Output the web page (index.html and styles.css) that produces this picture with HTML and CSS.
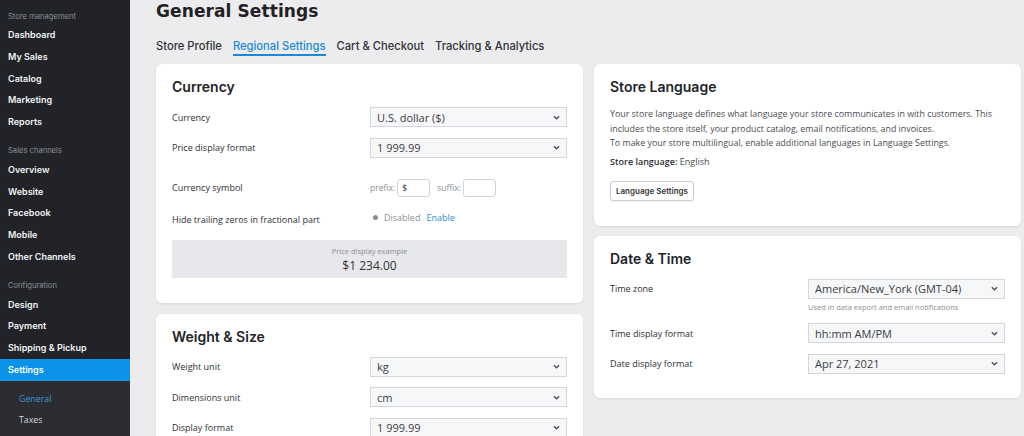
FILE: index.html
```html
<!DOCTYPE html>
<html lang="en">
<head>
<meta charset="utf-8">
<title>General Settings</title>
<link rel="stylesheet" href="styles.css">
</head>
<body>
<div class="app">
  <aside class="sidebar">
    <div class="nav-section">
      <div class="nav-heading">Store management</div>
      <a class="nav-item">Dashboard</a>
      <a class="nav-item">My Sales</a>
      <a class="nav-item">Catalog</a>
      <a class="nav-item">Marketing</a>
      <a class="nav-item">Reports</a>
    </div>
    <div class="nav-section">
      <div class="nav-heading">Sales channels</div>
      <a class="nav-item">Overview</a>
      <a class="nav-item">Website</a>
      <a class="nav-item">Facebook</a>
      <a class="nav-item">Mobile</a>
      <a class="nav-item">Other Channels</a>
    </div>
    <div class="nav-section">
      <div class="nav-heading">Configuration</div>
      <a class="nav-item">Design</a>
      <a class="nav-item">Payment</a>
      <a class="nav-item">Shipping &amp; Pickup</a>
      <a class="nav-item active">Settings</a>
    </div>
    <div class="subnav">
      <a class="sub-item active">General</a>
      <a class="sub-item">Taxes</a>
    </div>
  </aside>

  <main class="main">
    <h1 class="page-title">General Settings</h1>
    <nav class="tabs">
      <a class="tab">Store Profile</a>
      <a class="tab active">Regional Settings</a>
      <a class="tab">Cart &amp; Checkout</a>
      <a class="tab">Tracking &amp; Analytics</a>
    </nav>

    <div class="columns">
      <div class="column">
        <section class="card card-currency">
          <h2 class="card-title">Currency</h2>
          <div class="row">
            <span class="label">Currency</span>
            <div class="select"><span>U.S. dollar ($)</span><svg class="chev" viewBox="0 0 8 5"><path d="M1 1l3 3 3-3" /></svg></div>
          </div>
          <div class="row">
            <span class="label">Price display format</span>
            <div class="select"><span>1 999.99</span><svg class="chev" viewBox="0 0 8 5"><path d="M1 1l3 3 3-3" /></svg></div>
          </div>
          <div class="row row-symbol">
            <span class="label">Currency symbol</span>
            <div class="symbol-fields">
              <span class="hint">prefix:</span><span class="small-input">$</span>
              <span class="hint">suffix:</span><span class="small-input"></span>
            </div>
          </div>
          <div class="row row-zeros">
            <span class="label label-zeros">Hide trailing zeros in fractional part</span>
            <div class="status"><span class="dot"></span><span class="status-text">Disabled</span><a class="link">Enable</a></div>
          </div>
          <div class="example">
            <div class="example-caption">Price display example</div>
            <div class="example-value">$1 234.00</div>
          </div>
        </section>

        <section class="card">
          <h2 class="card-title">Weight &amp; Size</h2>
          <div class="row">
            <span class="label">Weight unit</span>
            <div class="select"><span>kg</span><svg class="chev" viewBox="0 0 8 5"><path d="M1 1l3 3 3-3" /></svg></div>
          </div>
          <div class="row">
            <span class="label">Dimensions unit</span>
            <div class="select"><span>cm</span><svg class="chev" viewBox="0 0 8 5"><path d="M1 1l3 3 3-3" /></svg></div>
          </div>
          <div class="row">
            <span class="label">Display format</span>
            <div class="select"><span>1 999.99</span><svg class="chev" viewBox="0 0 8 5"><path d="M1 1l3 3 3-3" /></svg></div>
          </div>
        </section>
      </div>

      <div class="column">
        <section class="card card-lang">
          <h2 class="card-title">Store Language</h2>
          <p class="desc">Your store language defines what language your store communicates in with customers. This includes the store itself, your product catalog, email notifications, and invoices.<br>To make your store multilingual, enable additional languages in Language Settings.</p>
          <p class="lang-line"><b>Store language:</b> English</p>
          <button class="btn">Language Settings</button>
        </section>

        <section class="card">
          <h2 class="card-title">Date &amp; Time</h2>
          <div class="row row-top">
            <span class="label">Time zone</span>
            <div class="field">
              <div class="select"><span>America/New_York (GMT-04)</span><svg class="chev" viewBox="0 0 8 5"><path d="M1 1l3 3 3-3" /></svg></div>
              <div class="helper">Used in data export and email notifications</div>
            </div>
          </div>
          <div class="row">
            <span class="label">Time display format</span>
            <div class="select"><span>hh:mm AM/PM</span><svg class="chev" viewBox="0 0 8 5"><path d="M1 1l3 3 3-3" /></svg></div>
          </div>
          <div class="row">
            <span class="label">Date display format</span>
            <div class="select"><span>Apr 27, 2021</span><svg class="chev" viewBox="0 0 8 5"><path d="M1 1l3 3 3-3" /></svg></div>
          </div>
        </section>
      </div>
    </div>
  </main>
</div>
</body>
</html>
```

FILE: styles.css
```css
* { box-sizing: border-box; }

html, body {
  margin: 0;
  padding: 0;
  height: 100%;
  overflow: hidden;
}

body {
  font-family: "Open Sans", "Noto Sans", sans-serif;
  color: #333;
  background: #ececee;
}

.app {
  display: flex;
  height: 436px;
  overflow: hidden;
}

/* Sidebar */
.sidebar {
  width: 130px;
  flex: none;
  background: #212328;
  padding-top: 8.5px;
  font-family: "Inter", "Liberation Sans", sans-serif;
  display: flex;
  flex-direction: column;
}

.nav-section + .nav-section { margin-top: 10.5px; }

.nav-heading {
  height: 15.5px;
  line-height: 15.5px;
  padding-left: 8px;
  font-size: 7.6px;
  color: #8c9097;
}

.nav-item {
  display: block;
  height: 21.75px;
  line-height: 21.75px;
  padding-left: 8px;
  font-size: 9px;
  font-weight: 600;
  color: #f2f3f5;
}

.nav-item.active {
  background: #0b93ea;
  color: #fff;
}

.subnav {
  flex: 1;
  background: #2b2d32;
  padding-top: 8px;
}

.sub-item {
  display: block;
  height: 21px;
  line-height: 21px;
  padding-left: 19px;
  font-family: "Open Sans", sans-serif;
  font-size: 8.8px;
  color: #d4d6da;
}

.sub-item.active { color: #3e95d8; }

/* Main */
.main {
  flex: 1;
  height: 436px;
  overflow: hidden;
  padding: 0 3px 0 26px;
}

.page-title {
  margin: 0;
  font-family: "DejaVu Sans", sans-serif;
  font-weight: bold;
  font-size: 17px;
  line-height: 22px;
  color: #1f2124;
  letter-spacing: 0.1px;
}

.tabs {
  display: flex;
  gap: 11px;
  margin-top: 14px;
  height: 28px;
  font-family: "Inter", sans-serif;
  font-size: 11.2px;
  font-weight: 500;
}

.tab {
  color: #303236;
  height: 20px;
  line-height: 20px;
  white-space: nowrap;
}

.tab.active {
  color: #1a8ad6;
  border-bottom: 2px solid #1a8ad6;
}

.columns {
  display: grid;
  grid-template-columns: 427px 427px;
  column-gap: 11px;
  align-items: start;
}

.column {
  display: flex;
  flex-direction: column;
  gap: 11px;
}

.column + .column { gap: 10px; }

.card {
  background: #fff;
  border-radius: 6px;
  box-shadow: 0 1px 3px rgba(0, 0, 0, 0.08);
  padding: 14px 16px 24px;
}

.card-currency { padding-bottom: 25px; }

.card-title {
  margin: 0 0 11px;
  font-family: "Inter", sans-serif;
  font-weight: 600;
  font-size: 14px;
  line-height: 18px;
  color: #232428;
}

.row {
  display: grid;
  grid-template-columns: 1fr 197px;
  align-items: center;
}

.row + .row { margin-top: 10.5px; }

.row-top { align-items: start; }
.row-top .label { line-height: 20px; }
.row-top + .row { margin-top: 11.5px; }

.label {
  font-size: 9px;
  color: #2e3033;
}

.select {
  height: 20px;
  border: 1px solid #d3d6da;
  background: #f6f7f9;
  display: flex;
  align-items: center;
  justify-content: space-between;
  padding: 0 6px;
  font-size: 11px;
  color: #3a3c40;
}

.chev {
  width: 7px;
  height: 5px;
  fill: none;
  stroke: #4a4d52;
  stroke-width: 1.5;
}

.field { display: flex; flex-direction: column; }

.helper {
  margin-top: 3px;
  font-size: 7.5px;
  line-height: 10px;
  color: #8b8e93;
}

/* Currency specific */
.row-symbol { margin-top: 21px !important; }
.row-zeros { margin-top: 14px !important; }
.label-zeros { position: relative; top: 2px; }

.symbol-fields {
  display: flex;
  align-items: center;
  gap: 2px;
}

.hint {
  font-size: 8.5px;
  color: #8b8e93;
}

.small-input {
  width: 33px;
  height: 18px;
  border: 1px solid #cfd2d6;
  border-radius: 3px;
  background: #fff;
  font-size: 8.5px;
  line-height: 16px;
  padding-left: 4px;
  color: #333;
  margin-right: 5px;
}

.status {
  display: flex;
  align-items: center;
  padding-left: 3px;
  font-size: 9px;
}

.dot {
  width: 5px;
  height: 5px;
  border-radius: 50%;
  background: #8b8e93;
  margin-right: 6px;
}

.status-text { color: #8b8e93; margin-right: 6px; }
.link { color: #2a8fd0; }

.example {
  margin-top: 16px;
  height: 38px;
  background: #e7e8eb;
  text-align: center;
  padding-top: 6px;
}

.example-caption {
  font-size: 7.5px;
  line-height: 11px;
  color: #8b8e93;
}

.example-value {
  font-size: 12px;
  line-height: 17px;
  color: #333;
}

/* Language card */
.desc {
  margin: 0;
  font-size: 8.85px;
  line-height: 14.5px;
  color: #4a4c50;
}

.lang-line {
  margin: 4px 0 0;
  font-size: 9px;
  line-height: 14px;
  color: #4a4c50;
}

.lang-line b { font-weight: 600; color: #2e3033; }

.btn {
  margin-top: 12px;
  height: 20px;
  padding: 0 5px;
  border: 1px solid #c8cbd0;
  border-radius: 3px;
  background: #fff;
  font-family: "Inter", sans-serif;
  font-weight: 600;
  font-size: 8px;
  color: #333;
  box-shadow: 0 1px 1px rgba(0,0,0,0.05);
}

.card-lang { padding-bottom: 25px; }
```
